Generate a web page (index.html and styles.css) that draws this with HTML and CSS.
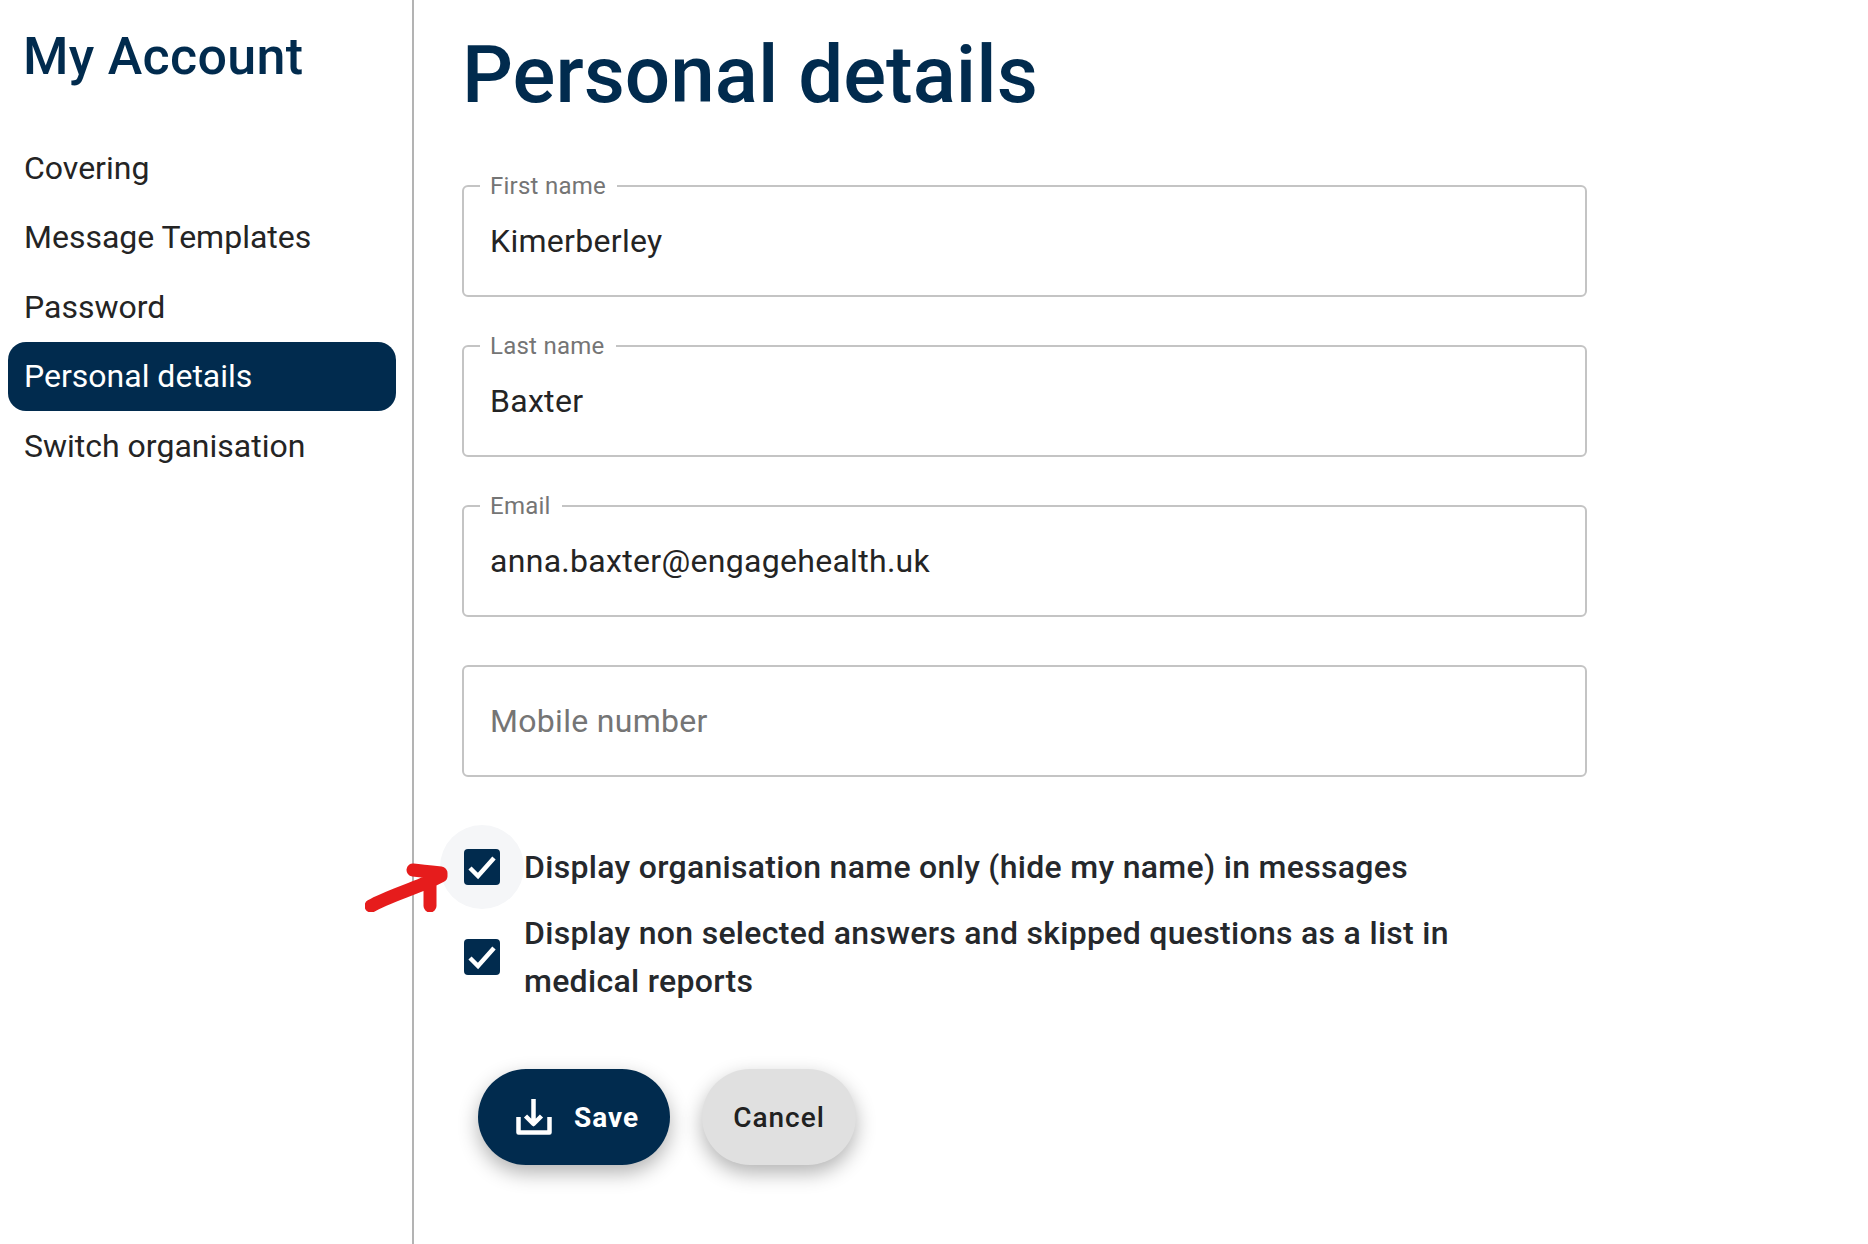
FILE: index.html
```html
<!DOCTYPE html>
<html lang="en">
<head>
    <meta charset="UTF-8">
    <meta name="viewport" content="width=device-width, initial-scale=1.0">
    <title>Personal details</title>
    <link rel="stylesheet" href="styles.css">
</head>
<body>

    <!-- Sidebar -->
    <aside class="sidebar">
        <h2 class="sidebar-title">My Account</h2>
        <nav class="side-nav">
            <a class="side-link">Covering</a>
            <a class="side-link">Message Templates</a>
            <a class="side-link">Password</a>
            <a class="side-link active">Personal details</a>
            <a class="side-link">Switch organisation</a>
        </nav>
    </aside>

    <!-- Main form -->
    <main class="content">
        <h1 class="page-title">Personal details</h1>

        <div class="field">
            <span class="field-label">First name</span>
            <span class="field-value">Kimerberley</span>
        </div>
        <div class="field">
            <span class="field-label">Last name</span>
            <span class="field-value">Baxter</span>
        </div>
        <div class="field">
            <span class="field-label">Email</span>
            <span class="field-value">anna.baxter@engagehealth.uk</span>
        </div>
        <div class="field">
            <span class="field-value placeholder">Mobile number</span>
        </div>

        <div class="check-row first">
            <span class="check-box hovered">
                <svg viewBox="0 0 36 36" class="check-mark"><path d="M6 19l8 8L30 9" /></svg>
            </span>
            <span class="check-text">Display organisation name only (hide my name) in messages</span>
        </div>
        <div class="check-row">
            <span class="check-box">
                <svg viewBox="0 0 36 36" class="check-mark"><path d="M6 19l8 8L30 9" /></svg>
            </span>
            <span class="check-text">Display non selected answers and skipped questions as a list in medical reports</span>
        </div>

        <div class="actions">
            <button class="btn btn-save">
                <svg viewBox="0 0 36 36" class="save-icon">
                    <path d="M17.500 0v25M9.500 17l8 8 8-8" />
                    <path d="M2.500 18v15.500h31V18" />
                </svg>
                Save
            </button>
            <button class="btn btn-cancel">Cancel</button>
        </div>
    </main>

    <!-- Red annotation arrow -->
    <svg class="annotation" viewBox="0 0 90 50">
        <path d="M6 44C20 36 42 29 58 22 64 19 70 17 76 14M48 8C56 9 66 10 76 11L76 14 64 20M65 22V44" />
    </svg>

</body>
</html>
```

FILE: styles.css
```css
/* General */
* {
    box-sizing: border-box;
}

body {
    margin: 0;
    height: 1244px;
    display: flex;
    overflow: hidden;
    font-family: Roboto, sans-serif;
    background-color: #fff;
    color: #242424;
}

/* Sidebar */
.sidebar {
    width: 414px;
    flex-shrink: 0;
    border-right: 2px solid #b3b3b3;
    padding: 24px 0 0 8px;
}

.sidebar-title {
    margin: 0 0 44px 15px;
    font-size: 52px;
    line-height: 65px;
    font-weight: 500;
    letter-spacing: 0.3px;
    color: #012b4e;
}

.side-nav {
    display: flex;
    flex-direction: column;
    width: 388px;
}

.side-link {
    height: 69.5px;
    display: flex;
    align-items: center;
    padding-left: 16px;
    font-size: 32px;
    border-radius: 18px;
}

.side-link.active {
    background-color: #012b4e;
    color: #fff;
}

/* Main */
.content {
    flex: 1;
    padding: 0 0 0 48px;
}

.page-title {
    margin: 22px 0 70px;
    height: 93px;
    font-size: 80px;
    line-height: 106px;
    font-weight: 500;
    color: #012b4e;
}

.field {
    position: relative;
    width: 1125px;
    height: 112px;
    margin-bottom: 48px;
    border: 2px solid #c4c4c4;
    border-radius: 6px;
    display: flex;
    align-items: center;
    padding-left: 26px;
}

.field-label {
    position: absolute;
    left: 16px;
    top: -15px;
    padding: 0 11px 0 10px;
    background-color: #fff;
    font-size: 24px;
    line-height: 28px;
    letter-spacing: 0.25px;
    color: #757575;
}

.field-value {
    font-size: 32px;
    letter-spacing: 0.3px;
}

.placeholder {
    color: #757575;
}

/* Checkboxes */
.check-row {
    display: flex;
    align-items: center;
    gap: 24px;
    width: 1010px;
}

.check-row.first {
    height: 84px;
}

.check-box {
    position: relative;
    width: 36px;
    height: 36px;
    flex-shrink: 0;
    margin-left: 2px;
    background-color: #012b4e;
    border-radius: 4px;
}

.check-box.hovered::before {
    content: "";
    position: absolute;
    left: -24px;
    top: -24px;
    width: 84px;
    height: 84px;
    border-radius: 50%;
    background-color: #f5f6f8;
    z-index: -1;
}

.check-mark {
    display: block;
    width: 36px;
    height: 36px;
    fill: none;
    stroke: #fff;
    stroke-width: 4.5;
}

.check-text {
    font-size: 32px;
    line-height: 48px;
    font-weight: 500;
    letter-spacing: 0.3px;
    color: #25282c;
}

/* Buttons */
.actions {
    display: flex;
    gap: 32px;
    margin: 64px 0 0 16px;
}

.btn {
    height: 96px;
    border: none;
    border-radius: 48px;
    display: flex;
    align-items: center;
    font-family: Roboto, sans-serif;
    font-size: 28px;
    font-weight: 500;
    letter-spacing: 1px;
    box-shadow: 0 8px 20px rgba(0, 0, 0, 0.3);
}

.btn-save {
    width: 192px;
    padding-left: 38px;
    gap: 22px;
    background-color: #012b4e;
    color: #fff;
    font-weight: 700;
}

.btn-cancel {
    width: 154px;
    justify-content: center;
    background-color: #e0e0e0;
    color: #212121;
}

.save-icon {
    width: 36px;
    height: 36px;
    fill: none;
    stroke: #fff;
    stroke-width: 4.5;
    stroke-linejoin: round;
}

/* Annotation */
.annotation {
    position: absolute;
    left: 365px;
    top: 862px;
    width: 90px;
    height: 50px;
    fill: none;
    stroke: #e61c1c;
    stroke-width: 13;
    stroke-linecap: round;
    stroke-linejoin: round;
}
```
